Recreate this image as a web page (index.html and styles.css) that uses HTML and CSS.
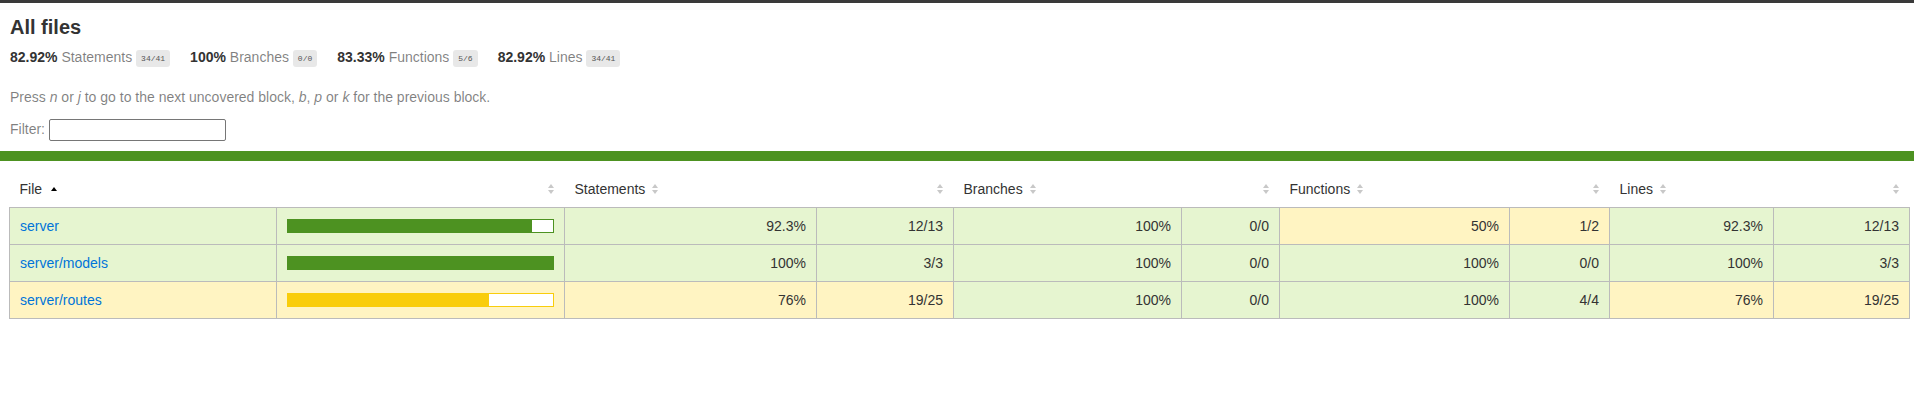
FILE: index.html
```html
<!doctype html>
<html lang="en">
<head>
<meta charset="utf-8">
<title>Code coverage report for All files</title>
<link rel="stylesheet" href="styles.css">
</head>
<body>
<div class="wrapper">
  <div class="pad1 header">
    <h1>All files</h1>
    <div class="clearfix">
      <div class="fl pad1y space-right2">
        <span class="strong">82.92% </span>
        <span class="quiet">Statements</span>
        <span class="fraction">34/41</span>
      </div>
      <div class="fl pad1y space-right2">
        <span class="strong">100% </span>
        <span class="quiet">Branches</span>
        <span class="fraction">0/0</span>
      </div>
      <div class="fl pad1y space-right2">
        <span class="strong">83.33% </span>
        <span class="quiet">Functions</span>
        <span class="fraction">5/6</span>
      </div>
      <div class="fl pad1y space-right2">
        <span class="strong">82.92% </span>
        <span class="quiet">Lines</span>
        <span class="fraction">34/41</span>
      </div>
    </div>
    <p class="quiet">
      Press <em>n</em> or <em>j</em> to go to the next uncovered block, <em>b</em>, <em>p</em> or <em>k</em> for the previous block.
    </p>
    <div class="quiet filter">
      Filter:
      <input type="search" class="file-search" aria-label="Filter">
    </div>
  </div>
  <div class="status-line high"></div>
  <div class="pad1 table-wrap">
    <table class="coverage-summary">
      <colgroup>
        <col class="w-file"><col class="w-pic"><col class="w-spct"><col class="w-sabs"><col class="w-bpct"><col class="w-babs"><col class="w-fpct"><col class="w-fabs"><col class="w-lpct"><col class="w-labs">
      </colgroup>
      <thead>
        <tr>
          <th class="file sorted">File<span class="sorter"></span></th>
          <th class="pic"><span class="sorter"></span></th>
          <th class="pct">Statements<span class="sorter"></span></th>
          <th class="abs"><span class="sorter"></span></th>
          <th class="pct">Branches<span class="sorter"></span></th>
          <th class="abs"><span class="sorter"></span></th>
          <th class="pct">Functions<span class="sorter"></span></th>
          <th class="abs"><span class="sorter"></span></th>
          <th class="pct">Lines<span class="sorter"></span></th>
          <th class="abs"><span class="sorter"></span></th>
        </tr>
      </thead>
      <tbody>
        <tr>
          <td class="file high"><a href="#">server</a></td>
          <td class="pic high"><div class="chart"><div class="cover-fill" style="width: 92%"></div><div class="cover-empty" style="width: 8%"></div></div></td>
          <td class="pct high">92.3%</td>
          <td class="abs high">12/13</td>
          <td class="pct high">100%</td>
          <td class="abs high">0/0</td>
          <td class="pct medium">50%</td>
          <td class="abs medium">1/2</td>
          <td class="pct high">92.3%</td>
          <td class="abs high">12/13</td>
        </tr>
        <tr>
          <td class="file high"><a href="#">server/models</a></td>
          <td class="pic high"><div class="chart"><div class="cover-fill cover-full" style="width: 100%"></div><div class="cover-empty" style="width: 0%"></div></div></td>
          <td class="pct high">100%</td>
          <td class="abs high">3/3</td>
          <td class="pct high">100%</td>
          <td class="abs high">0/0</td>
          <td class="pct high">100%</td>
          <td class="abs high">0/0</td>
          <td class="pct high">100%</td>
          <td class="abs high">3/3</td>
        </tr>
        <tr>
          <td class="file medium"><a href="#">server/routes</a></td>
          <td class="pic medium"><div class="chart"><div class="cover-fill" style="width: 76%"></div><div class="cover-empty" style="width: 24%"></div></div></td>
          <td class="pct medium">76%</td>
          <td class="abs medium">19/25</td>
          <td class="pct high">100%</td>
          <td class="abs high">0/0</td>
          <td class="pct high">100%</td>
          <td class="abs high">4/4</td>
          <td class="pct medium">76%</td>
          <td class="abs medium">19/25</td>
        </tr>
      </tbody>
    </table>
  </div>
</div>
</body>
</html>
```

FILE: styles.css
```css
*, *::before, *::after { box-sizing: border-box; }
html, body { margin: 0; padding: 0; }
body {
  font-family: "Liberation Sans", Arial, Helvetica, sans-serif;
  font-size: 14px;
  color: #333;
  border-top: 3px solid #3a3a3a;
  overflow: hidden;
}
h1 { font-size: 20px; margin: 0; }
a { color: #0074D9; text-decoration: none; }
.strong { font-weight: bold; }
.pad1 { padding: 10px; }
.pad1.header { padding-top: 13px; }
.pad1y { padding: 10px 0; }
.space-right2 { padding-right: 20px; }
.clearfix::after { content: ""; display: table; clear: both; }
.fl { float: left; }
.quiet { color: rgba(0, 0, 0, 0.5); }
p.quiet { margin: 14px 0; }

.fraction {
  font-family: "Liberation Mono", Consolas, Menlo, Courier, monospace;
  font-size: 8px;
  color: #555;
  background: #E8E8E8;
  padding: 4px 5px;
  border-radius: 3px;
  vertical-align: middle;
}

.file-search {
  width: 177px;
  height: 22px;
  border: 1px solid #767676;
  border-radius: 2px;
  padding: 1px 2px;
  font: 13px "Liberation Sans", Arial, sans-serif;
  vertical-align: middle;
  background: #fff;
}

.status-line { height: 10px; }
.status-line.high { background: rgb(77, 146, 33); }

.table-wrap { padding: 10px 5px 10px 9px; }

.coverage-summary {
  border-collapse: collapse;
  width: 100%;
  table-layout: fixed;
}
.w-file { width: 267px; }
.w-pic { width: 288px; }
.w-spct { width: 252px; }
.w-sabs { width: 137px; }
.w-bpct { width: 228px; }
.w-babs { width: 98px; }
.w-fpct { width: 230px; }
.w-fabs { width: 100px; }
.w-lpct { width: 164px; }
.w-labs { width: 136px; }

.coverage-summary tr { border-bottom: 1px solid #bbb; }
.coverage-summary tbody { border: 1px solid #bbb; }
.coverage-summary td,
.coverage-summary th { padding: 10px; }
.coverage-summary td { border-right: 1px solid #bbb; }
.coverage-summary td:last-child { border-right: none; }
.coverage-summary th {
  text-align: left;
  font-weight: normal;
  white-space: nowrap;
}
.coverage-summary th.pic,
.coverage-summary th.abs,
.coverage-summary td.pct,
.coverage-summary td.abs { text-align: right; }
.coverage-summary td.file { white-space: nowrap; }

.sorter {
  display: inline-block;
  position: relative;
  width: 7px;
  height: 10px;
  margin-left: 0.5em;
}
.sorter::before,
.sorter::after {
  content: "";
  position: absolute;
  left: 0;
  width: 0;
  height: 0;
  border-left: 3.5px solid transparent;
  border-right: 3.5px solid transparent;
}
.sorter::before { top: 0; border-bottom: 4px solid #c8c8c8; }
.sorter::after { bottom: 0; border-top: 4px solid #c8c8c8; }
.sorted .sorter::before { top: 3px; left: 1.5px; border-bottom: 4.5px solid #000; }
.sorted .sorter::after { display: none; }

.high { background: rgb(230, 245, 208); }
.medium { background: #fff4c2; }

.chart { line-height: 0; display: flex; }
.cover-fill, .cover-empty { display: inline-block; height: 12px; }
.cover-empty { background: #fff; }
.high .cover-fill { background: rgb(77, 146, 33); }
.high .chart { border: 1px solid rgb(77, 146, 33); }
.medium .cover-fill { background: #f9cd0b; }
.medium .chart { border: 1px solid #f9cd0b; }
```
